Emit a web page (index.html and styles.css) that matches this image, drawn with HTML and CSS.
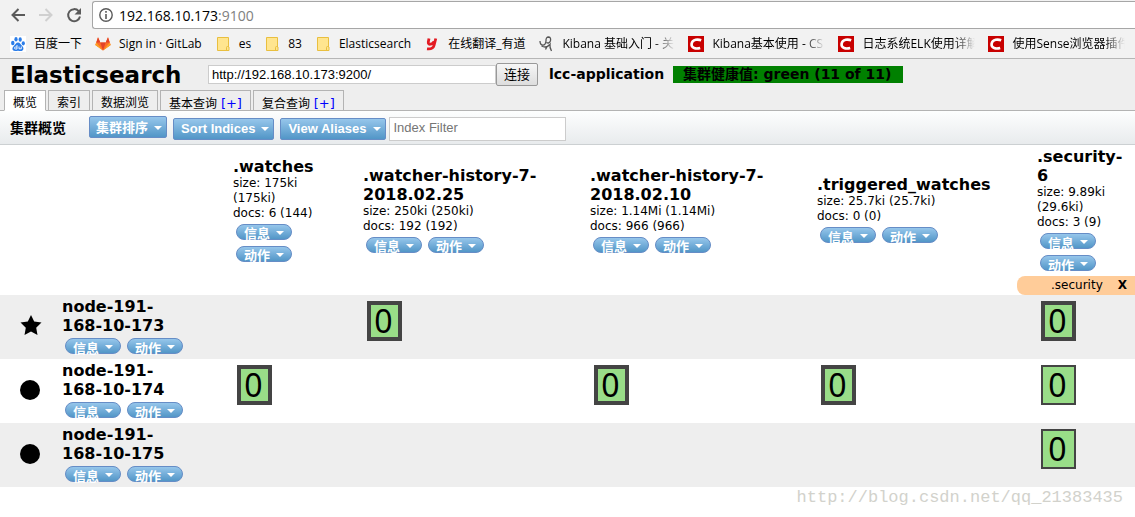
FILE: index.html
```html
<!DOCTYPE html>
<html lang="zh-CN">
<head>
<meta charset="utf-8">
<title>Elasticsearch</title>
<link rel="stylesheet" href="styles.css">
</head>
<body>
<svg class="defs" aria-hidden="true">
  <symbol id="folder" viewBox="0 0 16 16"><path d="M2.500 1.500h11v9.500h.5v3.500H2.500z" fill="#ffe58f" stroke="#e9bf3f"/><path d="M11.500 14.500v-3q0-1 1-1h1" fill="none" stroke="#e9bf3f"/></symbol>
  <symbol id="csdn" viewBox="0 0 16 16"><path d="M0 0h16v16H0z" fill="#c80000"/><path d="M13.200 4.300C10.500 3.300 4.300 2.800 3.600 7.800c-.6 4.500 4.400 5.300 8.600 4.100" fill="none" stroke="#fff" stroke-width="2.600"/></symbol>
</svg>
<header class="browser">
  <div class="toolbar">
    <button class="nav" aria-label="Back"><svg width="16" height="16" viewBox="0 0 16 16"><path d="M15 8H2.500M8.500 2L2.500 8l6 6" fill="none" stroke="#5a5a5a" stroke-width="2"/></svg></button>
    <button class="nav" aria-label="Forward"><svg width="16" height="16" viewBox="0 0 16 16"><path d="M1 8h12.500M7.500 2l6 6-6 6" fill="none" stroke="#d0d0d0" stroke-width="2"/></svg></button>
    <button class="nav" aria-label="Reload"><svg width="16" height="16" viewBox="0 0 16 16"><path d="M12.700 4.200A6 6 0 1 0 14 9.500" fill="none" stroke="#5a5a5a" stroke-width="2"/><path d="M15 1v6.500H8.500z" fill="#5a5a5a"/></svg></button>
    <div class="address">
      <svg width="14" height="14" viewBox="0 0 14 14"><circle cx="7" cy="7" r="6.200" fill="none" stroke="#5a5a5a" stroke-width="1.400"/><path d="M7 6v5M7 3v1.700" stroke="#5a5a5a" stroke-width="1.600"/></svg>
      <span>192.168.10.173<span class="port">:9100</span></span>
    </div>
  </div>
  <nav class="bookmarks">
    <a href="#"><svg viewBox="0 0 16 16"><path d="M0 0h16v16H0z" fill="#fff"/><g fill="#2b7de9"><ellipse cx="2.800" cy="7" rx="1.700" ry="2.200"/><ellipse cx="6" cy="3.300" rx="1.600" ry="2.300"/><ellipse cx="10.200" cy="3.500" rx="1.600" ry="2.300"/><ellipse cx="13.300" cy="7.300" rx="1.600" ry="2.100"/><path d="M8 6.500c2 0 2.700 2 4 3.300 2.500 2.400 1.500 5.300-1.200 5.300-1 0-1.800-.4-2.800-.4s-2 .5-3 .4c-2.800-.2-3.500-3-1-5.300C5.400 8.500 6 6.500 8 6.500z"/></g><path d="M7 9v4H5.500q-1 0-1-1t1-1H7M9 10.500v2.300h2.300v-2.300" fill="none" stroke="#fff" stroke-width=".9"/></svg><span>百度一下</span></a>
    <a href="#"><svg viewBox="0 0 16 16"><path d="M8 14.500L.3 9 3 1.200l2.300 5.300h5.400L13 1.200 15.700 9z" fill="#fc6d26"/><path d="M8 14.500L5.300 6.500h5.400z" fill="#e24329"/><path d="M8 14.500L.3 9l1-2.500z M8 14.500L15.700 9l-1-2.500z" fill="#fca326"/><path d="M3 1.200l2.300 5.300h-4zM13 1.200l-2.300 5.300h4z" fill="#e24329"/></svg><span>Sign in · GitLab</span></a>
    <a href="#"><svg><use href="#folder"/></svg><span>es</span></a>
    <a href="#"><svg><use href="#folder"/></svg><span>83</span></a>
    <a href="#"><svg><use href="#folder"/></svg><span>Elasticsearch</span></a>
    <a href="#"><svg viewBox="0 0 16 16"><path d="M5 2.500L4.300 6q-.3 2.500 2.200 2.200T10 5.500M11.800 2.500L10 9.500Q9 13.500 3 12.800" fill="none" stroke="#e31b23" stroke-width="2.800"/></svg><span>在线翻译_有道</span></a>
    <a href="#"><svg viewBox="0 0 16 16"><path d="M2 5q0 4 3 4.200Q7.500 9 8 5q-.3-4 2.700-4 2.600.3 1.700 4Q11 8 8.500 6.500M3.500 10q5 2.500 8.500-1.500-.5 3 1.500 6.500M12 8.500q-3 1-4.500 5" fill="none" stroke="#555" stroke-width="1.300"/></svg><span>Kibana 基础入门 - 关</span></a>
    <a href="#"><svg><use href="#csdn"/></svg><span>Kibana基本使用 - CS</span></a>
    <a href="#"><svg><use href="#csdn"/></svg><span>日志系统ELK使用详解</span></a>
    <a href="#"><svg><use href="#csdn"/></svg><span>使用Sense浏览器插件</span></a>
  </nav>
</header>

<section class="head">
  <div class="connect">
    <h1>Elasticsearch</h1>
    <form class="connect-form">
      <input type="text" aria-label="Server" value="http://192.168.10.173:9200/">
      <button type="button">连接</button>
    </form>
    <strong class="cluster">lcc-application</strong>
    <strong class="health">集群健康值: green (11 of 11)</strong>
  </div>
  <nav class="tabs">
    <a href="#" class="tab active">概览</a>
    <a href="#" class="tab">索引</a>
    <a href="#" class="tab">数据浏览</a>
    <a href="#" class="tab">基本查询 <span>[+]</span></a>
    <a href="#" class="tab">复合查询 <span>[+]</span></a>
  </nav>
</section>

<section class="filters">
  <h2>集群概览</h2>
  <button class="menu sort">集群排序</button>
  <button class="menu">Sort Indices</button>
  <button class="menu">View Aliases</button>
  <input type="text" placeholder="Index Filter" aria-label="Index Filter">
</section>

<main>
<table class="overview">
  <colgroup><col class="c-icon"><col class="c-node"><col class="c-small"><col class="c-wide"><col class="c-wide"><col class="c-mid"><col></colgroup>
  <thead>
    <tr class="indices">
      <td colspan="2"></td>
      <th scope="col"><h3>.watches</h3><p>size: 175ki (175ki)</p><p>docs: 6 (144)</p><div class="actions"><button class="pill">信息</button><button class="pill">动作</button></div></th>
      <th scope="col"><h3>.watcher-history-7-2018.02.25</h3><p>size: 250ki (250ki)</p><p>docs: 192 (192)</p><div class="actions"><button class="pill">信息</button><button class="pill">动作</button></div></th>
      <th scope="col"><h3>.watcher-history-7-2018.02.10</h3><p>size: 1.14Mi (1.14Mi)</p><p>docs: 966 (966)</p><div class="actions"><button class="pill">信息</button><button class="pill">动作</button></div></th>
      <th scope="col"><h3>.triggered_watches</h3><p>size: 25.7ki (25.7ki)</p><p>docs: 0 (0)</p><div class="actions"><button class="pill">信息</button><button class="pill">动作</button></div></th>
      <th scope="col"><h3>.security-6</h3><p>size: 9.89ki (29.6ki)</p><p>docs: 3 (9)</p><div class="actions"><button class="pill">信息</button><button class="pill">动作</button></div></th>
    </tr>
    <tr class="aliases">
      <td colspan="6"></td>
      <td><div class="alias"><span>.security</span><button aria-label="Remove alias">X</button></div></td>
    </tr>
  </thead>
  <tbody>
    <tr>
      <td class="role"><svg width="22" height="22" viewBox="0 0 22 22"><path d="M11 1l3.200 6.600 7.300 1-5.300 5.100 1.300 7.300L11 17.500 4.500 21l1.300-7.300L.5 8.600l7.300-1z"/></svg></td>
      <th scope="row"><h3>node-191-168-10-173</h3><div class="actions"><button class="pill">信息</button><button class="pill">动作</button></div></th>
      <td></td><td><button class="shard primary">0</button></td><td></td><td></td><td><button class="shard primary">0</button></td>
    </tr>
    <tr>
      <td class="role"><svg width="22" height="22" viewBox="0 0 22 22"><circle cx="10" cy="12" r="10"/></svg></td>
      <th scope="row"><h3>node-191-168-10-174</h3><div class="actions"><button class="pill">信息</button><button class="pill">动作</button></div></th>
      <td><button class="shard primary">0</button></td><td></td><td><button class="shard primary">0</button></td><td><button class="shard primary">0</button></td><td><button class="shard">0</button></td>
    </tr>
    <tr>
      <td class="role"><svg width="22" height="22" viewBox="0 0 22 22"><circle cx="10" cy="12" r="10"/></svg></td>
      <th scope="row"><h3>node-191-168-10-175</h3><div class="actions"><button class="pill">信息</button><button class="pill">动作</button></div></th>
      <td></td><td></td><td></td><td></td><td><button class="shard">0</button></td>
    </tr>
  </tbody>
</table>
</main>
<footer class="watermark">http://blog.csdn.net/qq_21383435</footer>
</body>
</html>
```
FILE: styles.css
```css
* { box-sizing: border-box; }
body {
  margin: 0;
  background: #fff;
  color: #000;
  font: 12px/15px "DejaVu Sans", "Noto Sans CJK SC", sans-serif;
}
h1, h2, h3, p { margin: 0; }
a { color: inherit; text-decoration: none; }
button, input { font: inherit; color: inherit; }
.defs { display: none; }

/* Browser chrome */
.browser {
  background: #f2f2f2;
  border-bottom: 1px solid #b6b6b6;
  font-family: "Open Sans", "Noto Sans CJK SC", sans-serif;
}
.toolbar { display: flex; align-items: center; padding: 1px 0 0 4px; height: 29px; }
.nav { width: 28px; height: 28px; padding: 6px; border: 0; background: none; }
.nav svg { display: block; }
.address {
  flex: 1;
  display: flex;
  align-items: center;
  gap: 6px;
  height: 28px;
  margin-left: 4px;
  padding: 0 6px;
  background: #fff;
  border: 1px solid #a6a6a6;
  border-right: 0;
  border-radius: 3px 0 0 3px;
  font-size: 14px;
}
.port { color: #808080; }
.bookmarks { display: flex; gap: 13px; height: 29px; padding: 0 0 0 10px; align-items: center; }
.bookmarks a { display: flex; flex: none; align-items: center; gap: 8px; }
.bookmarks svg { width: 16px; height: 16px; flex: none; }
.bookmarks span { white-space: nowrap; line-height: 18px; }
.bookmarks a:nth-child(n+7) span {
  width: 113px;
  -webkit-mask-image: linear-gradient(to right, #000 92px, transparent);
  mask-image: linear-gradient(to right, #000 92px, transparent);
}

/* Connection bar and tabs */
.head { background: #eee; border-bottom: 1px solid #b3b3b3; }
.connect { display: flex; align-items: center; height: 31px; padding-left: 10px; font-size: 14px; }
.connect h1 { width: 198px; font-size: 23px; line-height: 28px; }
.connect-form { display: flex; align-items: center; font-family: "Liberation Sans", "Noto Sans CJK SC", sans-serif; font-size: 13px; }
.connect-form input { width: 288px; height: 19px; padding: 0 3px; border: 1px solid #ccc; background: #fff; }
.connect-form button {
  height: 23px;
  width: 42px;
  padding: 0;
  border: 1px solid #999;
  border-radius: 2px;
  background: linear-gradient(#f6f6f6, #ddd);
}
.cluster { margin-left: 11px; width: 124px; font-size: 14px; line-height: 17px; white-space: nowrap; }
.health { padding: 0 12px 0 10px; background: #008000; line-height: 17px; white-space: nowrap; }
.tabs { display: flex; gap: 2px; padding-left: 4px; margin-bottom: -1px; }
.tab { height: 21px; padding: 4px 8px 0; border: 1px solid #b3b3b3; line-height: 17px; }
.tab.active { background: #fff; border-bottom-color: #fff; }
.tab span { color: #00f; font-size: 13px; }

/* Cluster overview toolbar */
.filters {
  display: flex;
  align-items: center;
  height: 34px;
  padding: 2px 0 0 10px;
  border-bottom: 1px solid #ccd0d2;
  background: linear-gradient(#fdfefe, #e8ebed);
  font-family: "Liberation Sans", "Noto Sans CJK SC", sans-serif;
}
.filters h2 { width: 79px; padding-bottom: 2px; font-size: 14px; line-height: 20px; }
.menu {
  height: 22px;
  margin-right: 6px;
  padding: 0 4px 0 7px;
  border: 1px solid #668dc6;
  border-radius: 2px;
  background: linear-gradient(#96c6eb, #5296c7);
  color: #fff;
  font-size: 13px;
  font-weight: bold;
  white-space: nowrap;
}
.menu.sort { align-self: flex-start; padding-left: 6px; margin-top: 3px; }
.filters .menu:nth-of-type(3) { margin-right: 3px; }
.menu::after, .pill::after {
  content: "";
  display: inline-block;
  margin-left: 6px;
  border: 4px solid transparent;
  border-top-color: #fff;
  border-bottom: 0;
  vertical-align: 2px;
}
.filters input { width: 177px; height: 24px; padding: 0 4px 2px; border: 1px solid #ccc; background: #fff; font-size: 13px; }
.filters input::placeholder { color: #757575; }

/* Shard grid */
.overview { width: 100%; table-layout: fixed; border-collapse: collapse; }
.c-icon { width: 42px; }
.c-node { width: 171px; }
.c-small { width: 130px; }
.c-wide { width: 227px; }
.c-mid { width: 220px; }
.overview th { padding: 2px 8px 2px 20px; text-align: left; font-weight: normal; }
.overview td { padding: 0; vertical-align: top; }
.overview tbody th { padding-right: 23px; }
.overview tbody td { padding: 6px 0 0 24px; }
.overview tbody .role { padding: 19px 0 0 20px; }
.role svg { display: block; }
.overview tbody tr:nth-child(odd) { background: #eee; }
.indices th:nth-child(2) { padding-right: 0; }
.overview h3 { font-size: 16px; line-height: 19px; }
.actions { display: flex; flex-wrap: wrap; }
.pill {
  display: flex;
  align-items: center;
  height: 16px;
  width: 56px;
  margin: 3px;
  padding: 2px 0 0 7px;
  border: 1px solid #668dc6;
  border-radius: 8px;
  background: linear-gradient(#96c6eb, #5296c7);
  color: #fff;
  font: bold 13px/13px "Noto Sans CJK SC", sans-serif;
  white-space: nowrap;
}
.alias {
  display: flex;
  justify-content: flex-end;
  gap: 15px;
  height: 19px;
  padding-right: 8px;
  background: #fc9;
  border-radius: 8px 0 0 8px;
  line-height: 19px;
}
.alias button { padding: 0; border: 0; background: none; font-weight: bold; }
.shard {
  display: block;
  width: 35px;
  height: 40px;
  padding: 0 2px 0 0;
  border: 2px solid #444;
  background: #9d8;
  font: 32px/36px "Noto Sans", sans-serif;
  text-align: center;
}
.shard.primary { border-width: 4px; line-height: 32px; }
.watermark {
  padding-right: 12px;
  color: #d2d2cc;
  font: 17px/22px "Liberation Mono", monospace;
  text-align: right;
}
```
